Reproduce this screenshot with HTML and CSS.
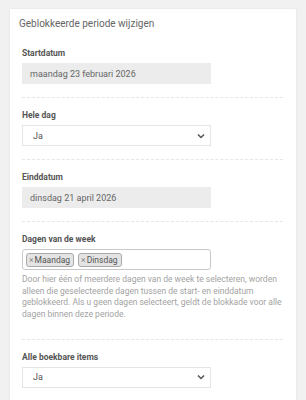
FILE: index.html
```html
<!DOCTYPE html>
<html lang="nl">
<head>
  <meta charset="UTF-8" />
  <meta name="viewport" content="width=device-width, initial-scale=1.0"/>
  <title>Geblokkeerde periode wijzigen</title>
  <link rel="stylesheet" href="styles.css">
</head>
<body>
  <div class="card">
    <h2 class="card-title">Geblokkeerde periode wijzigen</h2>

    <form class="block-form">
      <div class="form-group">
        <label>Startdatum</label>
        <div class="field field-readonly">maandag 23 februari 2026</div>
      </div>

      <div class="form-group">
        <label for="whole-day">Hele dag</label>
        <div class="field field-select">
          <span>Ja</span>
          <svg class="chevron" width="8" height="6" viewBox="0 0 8 6"><path d="M1 1.5 L4 4.5 L7 1.5" fill="none" stroke="#555" stroke-width="1.5"/></svg>
        </div>
      </div>

      <div class="form-group">
        <label>Einddatum</label>
        <div class="field field-readonly">dinsdag 21 april 2026</div>
      </div>

      <div class="form-group group-help">
        <label>Dagen van de week</label>
        <div class="field field-tags">
          <span class="tag"><span class="tag-x">×</span>Maandag</span>
          <span class="tag"><span class="tag-x">×</span>Dinsdag</span>
        </div>
        <p class="help-block">Door hier één of meerdere dagen van de week te selecteren, worden alleen die geselecteerde dagen tussen de start- en einddatum geblokkeerd. Als u geen dagen selecteert, geldt de blokkade voor alle dagen binnen deze periode.</p>
      </div>

      <div class="form-group">
        <label>Alle boekbare items</label>
        <div class="field field-select">
          <span>Ja</span>
          <svg class="chevron" width="8" height="6" viewBox="0 0 8 6"><path d="M1 1.5 L4 4.5 L7 1.5" fill="none" stroke="#555" stroke-width="1.5"/></svg>
        </div>
      </div>
    </form>
  </div>
</body>
</html>
```

FILE: styles.css
```css
* {
  margin: 0; padding: 0; box-sizing: border-box;
}
body {
  font-family: Roboto, "Liberation Sans", Arial, sans-serif;
  background-color: #f1f1f1;
  padding: 9px 10px 0;
  height: 400px;
  overflow: hidden;
}
.card {
  background-color: #fff;
  min-height: 400px;
  box-shadow: 0 0 2px rgba(0,0,0,0.08);
}
.card-title {
  font-size: 10px;
  font-weight: normal;
  color: #666;
  line-height: 14px;
  padding: 8px 9px 5px;
}
.block-form {
  padding: 0 13px 0 12px;
}
.form-group {
  padding: 12px 0 13px;
  border-bottom: 1px dashed #e6e6e6;
}
label {
  display: block;
  font-size: 8.5px;
  line-height: 10px;
  font-weight: bold;
  color: #555;
  margin-bottom: 5px;
}
.field {
  width: 189px;
  height: 21px;
  font-size: 9px;
  color: #666;
  display: flex;
  align-items: center;
}
.field-readonly {
  background-color: #ececec;
  padding-left: 8px;
}
.field-select {
  border: 1px solid #e5e5e5;
  padding: 0 5px 0 10px;
  justify-content: space-between;
  color: #555;
}
.field-tags {
  border: 1px solid #c8c8c8;
  border-radius: 3px;
  padding: 0 3px;
  gap: 4px;
}
.tag {
  display: flex;
  align-items: center;
  height: 14px;
  padding: 0 3px 0 2px;
  background-color: #e4e4e4;
  border: 1px solid #aaa;
  border-radius: 3px;
  font-size: 8.5px;
  color: #555;
}
.tag-x {
  color: #888;
  margin-right: 1px;
}
.group-help {
  padding-bottom: 18px;
}
.help-block {
  margin-top: 4px;
  font-size: 8.5px;
  line-height: 11.7px;
  color: #a3a3a3;
}
```
